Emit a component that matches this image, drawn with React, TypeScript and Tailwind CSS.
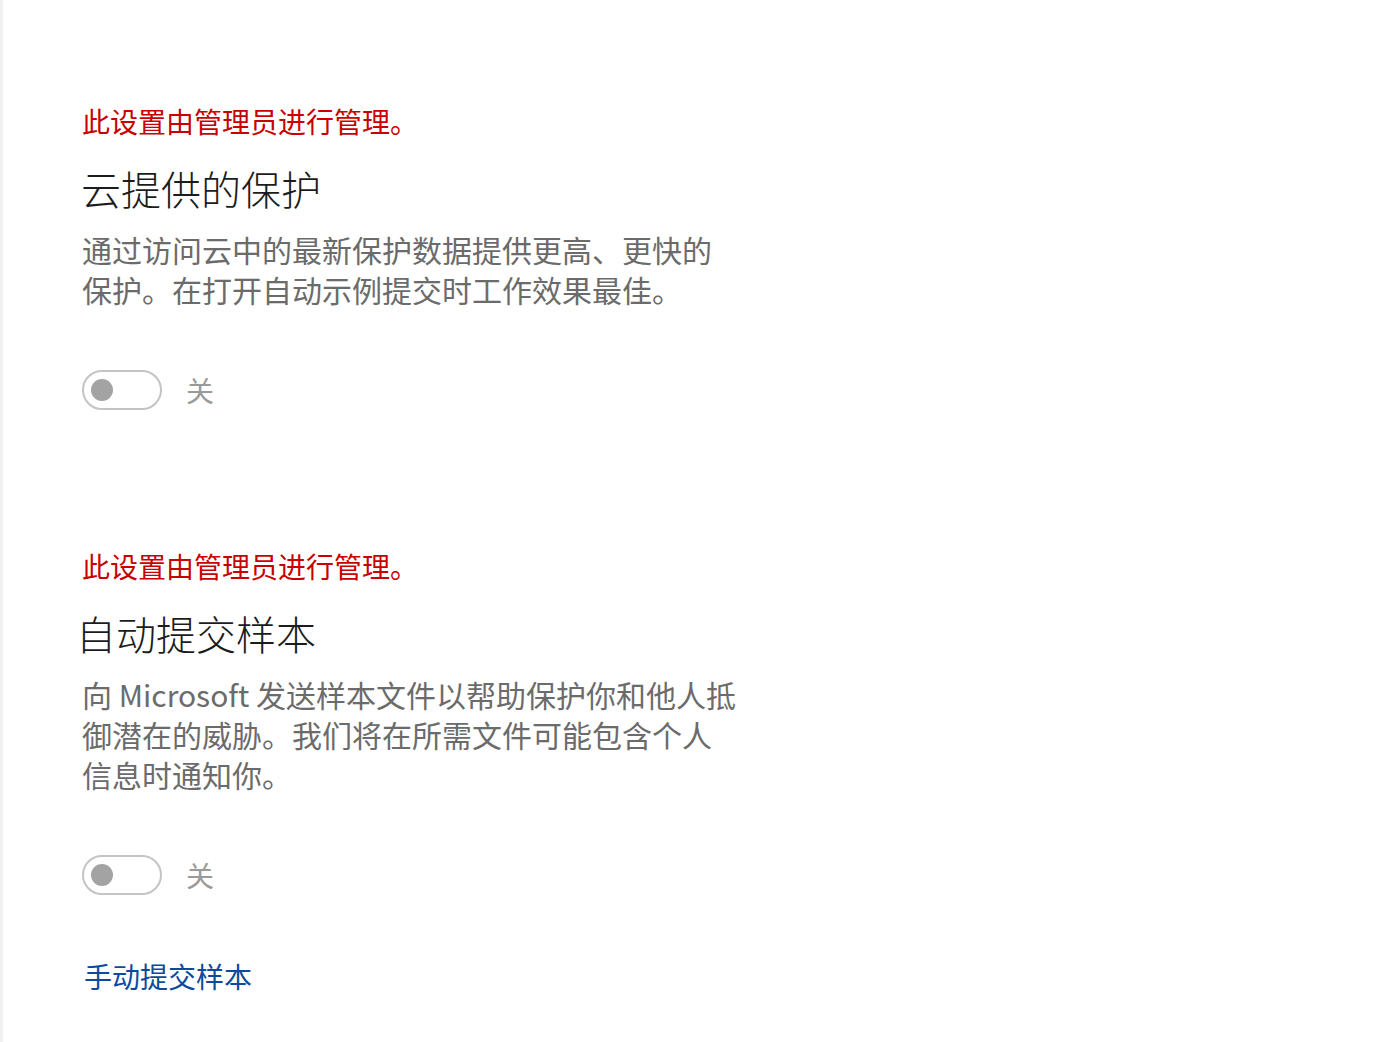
import React from 'react';

const font = { fontFamily: '"Noto Sans CJK SC", "Noto Sans", sans-serif' };

interface SettingProps {
  title: string;
  titleClass?: string;
  description: React.ReactNode;
}

const Toggle: React.FC = () => (
  <div className="flex items-center">
    <div className="w-[80px] h-[40px] rounded-full border-2 border-[#c4c4c4] flex items-center pl-[7px]">
      <div className="w-[22px] h-[22px] rounded-full bg-[#a3a3a3]" />
    </div>
    <span className="ml-[24px] text-[28px] leading-[40px] text-[#9a9a9a]">关</span>
  </div>
);

const ManagedSetting: React.FC<SettingProps> = ({ title, titleClass = '', description }) => (
  <section className="flex flex-col">
    <p className="text-[28px] leading-[40px] text-[#c80000]">此设置由管理员进行管理。</p>
    <h2 className={`mt-[19px] text-[40px] leading-[56px] font-light text-[#1c1c1c] ${titleClass}`}>{title}</h2>
    <p className="mt-[13px] w-[658px] text-[30px] leading-[40px] text-[#6b6b6b]">{description}</p>
    <div className="mt-[61px]">
      <Toggle />
    </div>
  </section>
);

export default function App() {
  return (
    <div className="w-full h-[1042px] bg-white border-l-[3px] border-[#f0f0f0]" style={font}>
      <div className="pl-[79px] pt-[101px] flex flex-col">
        <ManagedSetting
          title="云提供的保护"
          titleClass="-ml-[1px]"
          description="通过访问云中的最新保护数据提供更高、更快的保护。在打开自动示例提交时工作效果最佳。"
        />
        <div className="mt-[136px]">
          <ManagedSetting
            title="自动提交样本"
            titleClass="-ml-[6px]"
            description="向 Microsoft 发送样本文件以帮助保护你和他人抵御潜在的威胁。我们将在所需文件可能包含个人信息时通知你。"
          />
        </div>
        <a className="mt-[61px] ml-[2px] text-[28px] leading-[40px] text-[#0b4a9c] cursor-pointer">手动提交样本</a>
      </div>
    </div>
  );
}
